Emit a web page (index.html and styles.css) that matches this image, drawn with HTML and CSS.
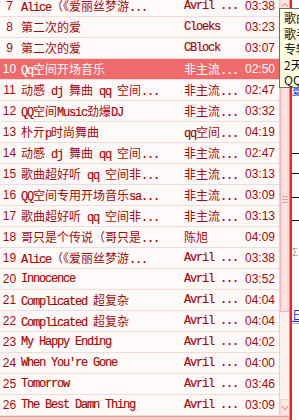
FILE: index.html
```html
<!DOCTYPE html>
<html>
<head>
<meta charset="utf-8">
<link rel="stylesheet" href="styles.css">
</head>
<body>
<div class="window">
  <div class="panel">
    <div class="main">
      <div class="list">
        <div class="row"><span class="n">7</span><span class="t">Alice<span class="c">（《爱丽丝梦游</span>...</span><span class="a">Avril ...</span><span class="d">03:38</span></div>
        <div class="row"><span class="n">8</span><span class="t"><span class="c">第二次的爱</span></span><span class="a">Cloeks</span><span class="d">03:23</span></div>
        <div class="row"><span class="n">9</span><span class="t"><span class="c">第二次的爱</span></span><span class="a">CBlock</span><span class="d">03:07</span></div>
        <div class="row sel"><span class="n">10</span><span class="t">Qq<span class="c">空间开场音乐</span></span><span class="a"><span class="c">非主流</span>...</span><span class="d">02:50</span></div>
        <div class="row"><span class="n">11</span><span class="t"><span class="c">动感</span> dj <span class="c">舞曲</span> qq <span class="c">空间</span>...</span><span class="a"><span class="c">非主流</span>...</span><span class="d">02:47</span></div>
        <div class="row"><span class="n">12</span><span class="t">QQ<span class="c">空间</span>Music<span class="c">劲爆</span>DJ</span><span class="a"><span class="c">非主流</span>...</span><span class="d">03:32</span></div>
        <div class="row"><span class="n">13</span><span class="t"><span class="c">朴亓</span>p<span class="c">时尚舞曲</span></span><span class="a">qq<span class="c">空间</span>...</span><span class="d">04:19</span></div>
        <div class="row"><span class="n">14</span><span class="t"><span class="c">动感</span> dj <span class="c">舞曲</span> qq <span class="c">空间</span>...</span><span class="a"><span class="c">非主流</span>...</span><span class="d">02:47</span></div>
        <div class="row"><span class="n">15</span><span class="t"><span class="c">歌曲超好听</span> qq <span class="c">空间非</span>...</span><span class="a"><span class="c">非主流</span>...</span><span class="d">03:13</span></div>
        <div class="row"><span class="n">16</span><span class="t">QQ<span class="c">空间专用开场音乐</span>sa...</span><span class="a"><span class="c">非主流</span>...</span><span class="d">03:09</span></div>
        <div class="row"><span class="n">17</span><span class="t"><span class="c">歌曲超好听</span> qq <span class="c">空间非</span>...</span><span class="a"><span class="c">非主流</span>...</span><span class="d">03:13</span></div>
        <div class="row"><span class="n">18</span><span class="t"><span class="c">哥只是个传说（哥只是</span>...</span><span class="a"><span class="c">陈旭</span></span><span class="d">04:09</span></div>
        <div class="row"><span class="n">19</span><span class="t">Alice<span class="c">（《爱丽丝梦游</span>...</span><span class="a">Avril ...</span><span class="d">03:38</span></div>
        <div class="row"><span class="n">20</span><span class="t">Innocence</span><span class="a">Avril ...</span><span class="d">03:52</span></div>
        <div class="row"><span class="n">21</span><span class="t">Complicated <span class="c">超复杂</span></span><span class="a">Avril ...</span><span class="d">04:04</span></div>
        <div class="row"><span class="n">22</span><span class="t">Complicated <span class="c">超复杂</span></span><span class="a">Avril ...</span><span class="d">04:04</span></div>
        <div class="row"><span class="n">23</span><span class="t">My Happy Ending</span><span class="a">Avril ...</span><span class="d">04:02</span></div>
        <div class="row"><span class="n">24</span><span class="t">When You're Gone</span><span class="a">Avril ...</span><span class="d">04:00</span></div>
        <div class="row"><span class="n">25</span><span class="t">Tomorrow</span><span class="a">Avril ...</span><span class="d">03:46</span></div>
        <div class="row"><span class="n">26</span><span class="t">The Best Damn Thing</span><span class="a">Avril ...</span><span class="d">03:09</span></div>
      </div>
      <div class="scroll">
        <div class="btn"><svg width="9" height="6" viewBox="0 0 9 6"><path d="M1 5 L4.5 1.5 L8 5" fill="none" stroke="#ee9a9a" stroke-width="1.4"/></svg></div>
        <div class="thumb"><div class="grip"></div><div class="grip"></div><div class="grip"></div></div>
        <div class="track"></div>
        <div class="btn"><svg width="9" height="6" viewBox="0 0 9 6"><path d="M1 1 L4.5 4.5 L8 1" fill="none" stroke="#ee9a9a" stroke-width="1.4"/></svg></div>
      </div>
    </div>
    <div class="foot"></div>
  </div>
  <div class="edge"></div>
  <div class="behind">
    <span class="blue b1">夏</span>
    <div class="tick t1"></div>
    <div class="tick t2"></div>
    <div class="tick t3"></div>
    <div class="tick t4"></div>
    <span class="gray">Σ</span>
    <span class="blue b2">日</span>
  </div>
  <div class="tip">
    <div>歌曲：Qq空间开场音乐</div>
    <div>歌手：非主流</div>
    <div>专辑：未知</div>
    <div>2天前</div>
    <div>QQ音乐</div>
  </div>
</div>
</body>
</html>
```
FILE: styles.css
```css
html, body {
  margin: 0;
  padding: 0;
  width: 299px;
  height: 420px;
  overflow: hidden;
  background: #fff;
}
.window {
  position: relative;
  display: flex;
  width: 299px;
  height: 420px;
  overflow: hidden;
}
.panel {
  width: 290px;
  flex: none;
  display: flex;
  flex-direction: column;
  margin-top: -4px;
}
.main {
  display: flex;
  height: 420px;
  flex: none;
}
.list {
  width: 279px;
  flex: none;
  overflow: hidden;
  background: #fffafa;
}
.row {
  display: grid;
  grid-template-columns: 19px 165px 57px 34px;
  height: 20px;
  line-height: 20px;
  border-bottom: 1px solid #f4dada;
  color: #9e0b0b;
  font-family: "Liberation Mono", monospace;
  font-size: 12px;
  letter-spacing: -1.2px;
  white-space: nowrap;
  -webkit-text-stroke: 0.2px currentColor;
}
.row.sel {
  background: #ef6b6b;
  color: #fff;
}
.c {
  font-family: "Noto Sans CJK SC", sans-serif;
  font-size: 12px;
  letter-spacing: 0;
  -webkit-text-stroke: 0;
}
.n, .d {
  font-family: "Liberation Sans", Arial, sans-serif;
  font-size: 12px;
  letter-spacing: 0;
  -webkit-text-stroke: 0;
}
.n { text-align: center; }
.d { text-align: right; }
.t {
  padding-left: 2px;
  overflow: hidden;
}
.a { overflow: hidden; }
.scroll {
  width: 11px;
  flex: none;
  box-sizing: border-box;
  display: flex;
  flex-direction: column;
  background: #fdf0f0;
  border-left: 1px solid #f2caca;
}
.btn {
  height: 17px;
  flex: none;
  box-sizing: border-box;
  border: 1px solid #f6d2d2;
  background: #fde6e6;
  display: flex;
  align-items: center;
  justify-content: center;
}
.thumb {
  margin-top: 73px;
  height: 226px;
  flex: none;
  box-sizing: border-box;
  border: 1px solid #efb3b3;
  background: linear-gradient(to right, #fbd6d6, #fde5e5, #fbd3d3);
  display: flex;
  flex-direction: column;
  align-items: center;
  justify-content: center;
  gap: 2px;
}
.grip {
  width: 6px;
  height: 1px;
  background: #eb9f9f;
}
.track { flex: 1; }
.foot {
  height: 8px;
  flex: none;
  background: #f9caca;
  border-top: 1px solid #eb9e9e;
}
.edge {
  width: 2px;
  flex: none;
  background: #dc2929;
  box-shadow: -1px 0 0 #f08a8a;
}
.behind {
  width: 7px;
  flex: none;
  overflow: hidden;
  display: flex;
  flex-direction: column;
  background: #fff;
  font-family: "Noto Sans CJK SC", sans-serif;
  font-size: 12px;
  line-height: 12px;
}
.blue {
  color: #1a2fc8;
  text-decoration: underline;
}
.b1 {
  margin-top: 88px;
  height: 8px;
  line-height: 8px;
  font-size: 9px;
  overflow: hidden;
  flex: none;
}
.tick {
  height: 1px;
  background: #111;
  flex: none;
}
.t1 { margin-top: 57px; }
.t2 { margin-top: 19px; }
.t3 { margin-top: 23px; }
.t4 { margin-top: 22px; }
.gray {
  margin-top: 26px;
  color: #999;
  font-size: 10px;
  line-height: 10px;
}
.b2 {
  margin-top: 52px;
  border-bottom: 1px solid #8fb0e8;
  padding-bottom: 2px;
}
.tip {
  position: absolute;
  left: 279px;
  top: 8px;
  width: 120px;
  height: 80px;
  box-sizing: border-box;
  padding: 1px 0 0 4px;
  background: #ffffe1;
  border: 1px solid #6f6f6f;
  font-family: "Noto Sans CJK SC", sans-serif;
  font-size: 12px;
  line-height: 15.5px;
  color: #111;
  white-space: nowrap;
}
```
